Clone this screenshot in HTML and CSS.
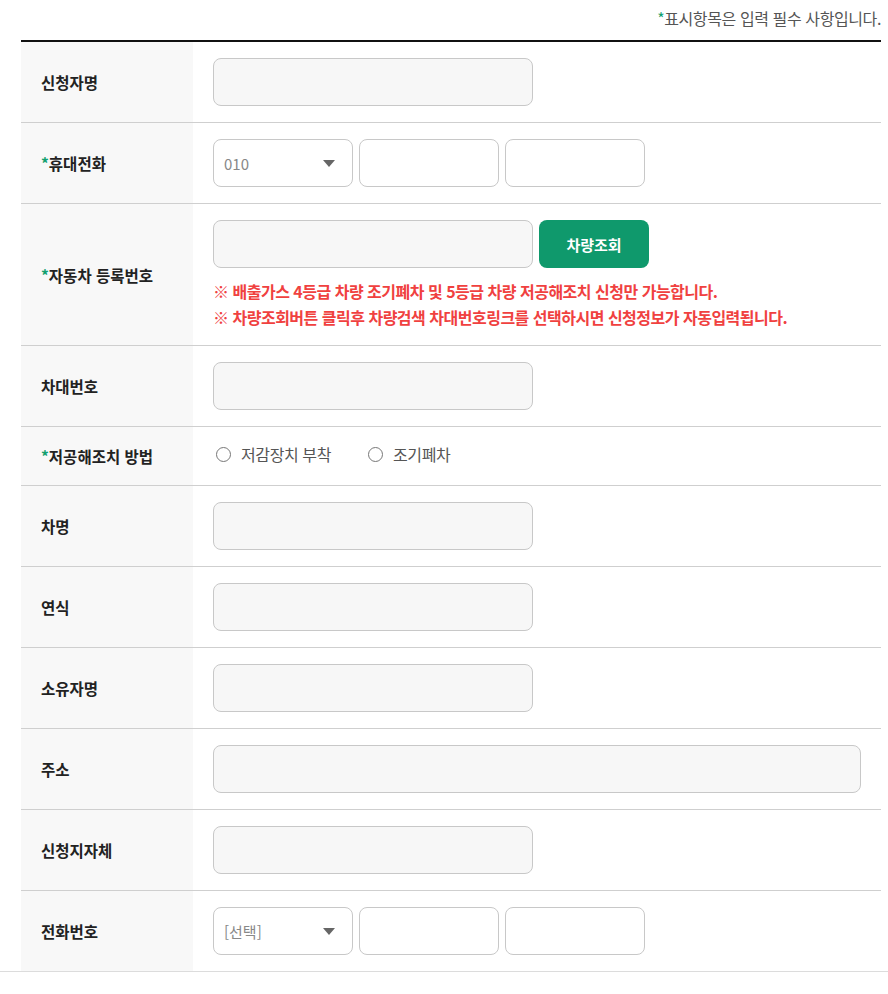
FILE: index.html
```html
<!DOCTYPE html>
<html lang="ko">
<head>
<meta charset="utf-8">
<title>신청서</title>
<link rel="stylesheet" href="styles.css">
</head>
<body>
<div class="wrap">
  <p class="req-note"><span class="star">*</span>표시항목은 입력 필수 사항입니다.</p>
  <table class="form">
    <tbody>
      <tr>
        <th>신청자명</th>
        <td><input class="field" type="text"></td>
      </tr>
      <tr>
        <th><span class="star">*</span>휴대전화</th>
        <td>
          <div class="multi">
            <div class="sel"><span class="sel-text">010</span><svg class="caret" width="12" height="7" viewBox="0 0 12 7"><path d="M0 0H12L6 7Z" fill="#666"/></svg></div>
            <input class="field white short" type="text">
            <input class="field white short" type="text">
          </div>
        </td>
      </tr>
      <tr>
        <th><span class="star">*</span>자동차 등록번호</th>
        <td>
          <div class="multi">
            <input class="field" type="text">
            <button class="btn" type="button">차량조회</button>
          </div>
          <div class="notes">
            <p>※ 배출가스 4등급 차량 조기폐차 및 5등급 차량 저공해조치 신청만 가능합니다.</p>
            <p>※ 차량조회버튼 클릭후 차량검색 차대번호링크를 선택하시면 신청정보가 자동입력됩니다.</p>
          </div>
        </td>
      </tr>
      <tr>
        <th>차대번호</th>
        <td><input class="field" type="text"></td>
      </tr>
      <tr class="radio-row">
        <th><span class="star">*</span>저공해조치 방법</th>
        <td>
          <div class="radios">
            <label class="radio"><span class="circle"></span>저감장치 부착</label>
            <label class="radio"><span class="circle"></span>조기폐차</label>
          </div>
        </td>
      </tr>
      <tr>
        <th>차명</th>
        <td><input class="field" type="text"></td>
      </tr>
      <tr>
        <th>연식</th>
        <td><input class="field" type="text"></td>
      </tr>
      <tr>
        <th>소유자명</th>
        <td><input class="field" type="text"></td>
      </tr>
      <tr>
        <th>주소</th>
        <td><input class="field wide" type="text"></td>
      </tr>
      <tr>
        <th>신청지자체</th>
        <td><input class="field" type="text"></td>
      </tr>
      <tr class="last">
        <th>전화번호</th>
        <td>
          <div class="multi">
            <div class="sel"><span class="sel-text">[선택]</span><svg class="caret" width="12" height="7" viewBox="0 0 12 7"><path d="M0 0H12L6 7Z" fill="#666"/></svg></div>
            <input class="field white short" type="text">
            <input class="field white short" type="text">
          </div>
        </td>
      </tr>
    </tbody>
  </table>
</div>
<div class="bottom-line"></div>
</body>
</html>
```
FILE: styles.css
```css
* { box-sizing: border-box; }
html, body { margin: 0; padding: 0; background: #fff; }
body {
  font-family: "Noto Sans CJK KR", "Noto Sans", sans-serif;
  font-size: 15px;
  color: #222;
}
.wrap {
  margin-left: 21px;
  width: 860px;
}
.req-note {
  margin: 0;
  height: 40px;
  line-height: 36px;
  text-align: right;
  color: #555;
  font-size: 16px;
  letter-spacing: -0.4px;
}
.star { color: #12a06f; }
.form {
  width: 100%;
  border-collapse: collapse;
  border-top: 2px solid #111;
}
.form tr { border-bottom: 1px solid #cfcfcf; }
.form tr.last { border-bottom: 0; }
.form th {
  width: 172px;
  background: #f8f8f8;
  text-align: left;
  padding: 0 10px 0 20px;
  font-weight: 700;
  font-size: 15.5px;
  color: #222;
  vertical-align: middle;
}
.form td {
  padding: 16px 20px;
  vertical-align: middle;
}
.multi {
  display: flex;
  gap: 6px;
}
.field {
  display: block;
  width: 320px;
  height: 48px;
  border: 1px solid #c8c8c8;
  border-radius: 8px;
  background: #f7f7f7;
  font: inherit;
  padding: 0 10px;
  margin: 0;
  outline: none;
}
.field.white { background: #fff; }
.field.short { width: 140px; }
.field.wide { width: 100%; }
.sel {
  position: relative;
  width: 140px;
  height: 48px;
  border: 1px solid #c8c8c8;
  border-radius: 8px;
  background: #fff;
  display: flex;
  align-items: center;
  padding-left: 10px;
}
.sel-text { color: #888; font-size: 15px; }
.caret {
  position: absolute;
  right: 17px;
  top: 20px;
}
.btn {
  width: 110px;
  height: 48px;
  border: 0;
  border-radius: 8px;
  background: #0f996c;
  color: #fff;
  font: inherit;
  font-weight: 700;
  font-size: 15px;
  cursor: pointer;
}
.notes {
  margin-top: 10px;
  margin-bottom: -1px;
}
.notes p {
  margin: 0;
  line-height: 26px;
  color: #f0413f;
  font-weight: 700;
  font-size: 16px;
  letter-spacing: -0.5px;
}
.radio-row td { padding-top: 14px; padding-bottom: 18px; }
.radios {
  display: flex;
  gap: 34px;
  height: 26px;
  align-items: center;
}
.radio {
  display: flex;
  align-items: center;
  gap: 10px;
  color: #555;
  font-size: 16px;
  letter-spacing: -0.4px;
}
.circle {
  width: 15px;
  height: 15px;
  margin-left: 3px;
  border: 1px solid #777;
  border-radius: 50%;
  background: #fff;
}
.bottom-line {
  height: 1px;
  background: #dcdcdc;
}
```
